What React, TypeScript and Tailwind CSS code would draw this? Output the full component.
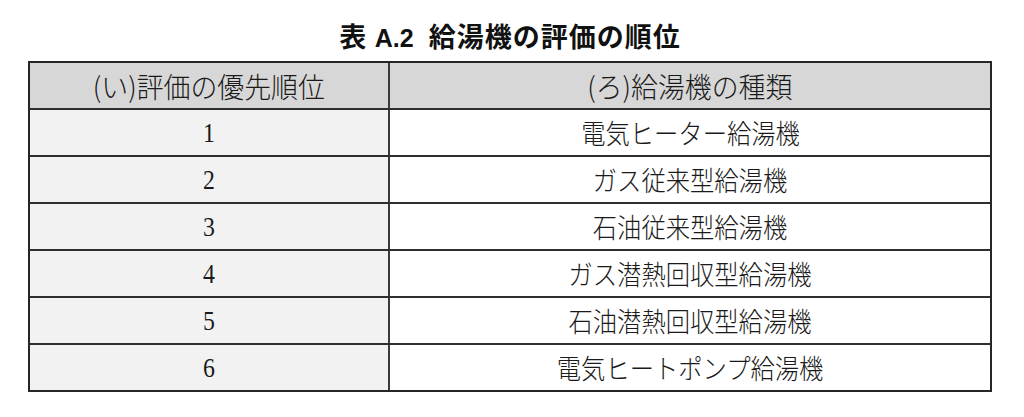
import React from "react";

const rows: [string, string][] = [
  ["1", "電気ヒーター給湯機"],
  ["2", "ガス従来型給湯機"],
  ["3", "石油従来型給湯機"],
  ["4", "ガス潜熱回収型給湯機"],
  ["5", "石油潜熱回収型給湯機"],
  ["6", "電気ヒートポンプ給湯機"],
];

export default function App() {
  return (
    <div className="w-[1024px] h-[417px] bg-white text-[#1a1a1a] overflow-hidden">
      <div className="ml-[28px] w-[964px]">
        <div className="pt-[22px] h-[61px] flex justify-center">
          <div
            className="text-[27px] leading-[32px] font-bold whitespace-pre text-[#111]"
            style={{ fontFamily: '"Liberation Sans", "Noto Sans CJK JP", sans-serif' }}
          >
            <span className="tracking-[1px]">表</span>
            <span> </span>
            <span className="text-[25px]">A.2</span>
            <span>  </span>
            <span className="tracking-[1px]">給湯機の評価の順位</span>
          </div>
        </div>
        <div
          className="border-2 border-[#262626] font-light"
          style={{ fontFamily: '"Noto Sans CJK JP", sans-serif' }}
        >
          <div className="grid grid-cols-[360px_1fr] h-[45px] bg-[#d7d7d7]">
            <div className="border-r-2 border-[#3a3a3a] flex items-center justify-center">
              <span className="text-[28px] leading-none scale-x-[0.96] whitespace-nowrap">(い)評価の優先順位</span>
            </div>
            <div className="flex items-center justify-center">
              <span className="text-[28px] leading-none scale-x-[0.96] whitespace-nowrap">(ろ)給湯機の種類</span>
            </div>
          </div>
          {rows.map(([n, name]) => (
            <div key={n} className="grid grid-cols-[360px_1fr] h-[47px] border-t-2 border-[#2e2e2e]">
              <div
                className="bg-[#f2f2f2] border-r-2 border-[#3a3a3a] flex items-center justify-center font-normal"
                style={{ fontFamily: '"Liberation Serif", serif' }}
              >
                <span className="text-[28px] leading-none scale-x-[0.85]">{n}</span>
              </div>
              <div className="bg-white flex items-center justify-center">
                <span className="text-[27px] leading-none scale-x-[0.9] whitespace-nowrap">{name}</span>
              </div>
            </div>
          ))}
        </div>
      </div>
    </div>
  );
}
